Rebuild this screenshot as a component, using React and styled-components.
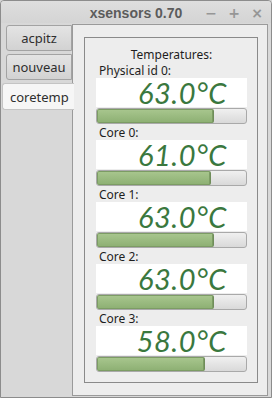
import React from "react";
import styled, { createGlobalStyle } from "styled-components";

const GlobalStyle = createGlobalStyle`
  html, body {
    margin: 0;
    padding: 0;
    background: #d6d6d6;
  }
  * { box-sizing: border-box; }
`

const Window = styled.div`
  width: 272px;
  height: 398px;
  border: 1px solid #8c8c8c;
  border-radius: 4px 4px 0 0;
  background: #d8d8d8;
  display: flex;
  flex-direction: column;
  font-family: "Noto Sans", "DejaVu Sans", sans-serif;
  overflow: hidden;
`
const TitleBar = styled.div`
  height: 23px;
  display: grid;
  grid-template-columns: 1fr auto 1fr;
  align-items: center;
  background: linear-gradient(#dedede, #d4d4d4);
`
const Title = styled.div`
  grid-column: 2;
  font-family: "Liberation Sans", "DejaVu Sans", sans-serif;
  font-weight: bold;
  font-size: 14px;
  color: #5c5c5c;
  padding-top: 2px;
`
const TitleButtons = styled.div`
  grid-column: 3;
  justify-self: end;
  display: flex;
  gap: 11px;
  padding-right: 8px;
  padding-top: 1px;
`
const TitleButton = styled.span`
  width: 12px;
  text-align: center;
  font-family: "DejaVu Sans", sans-serif;
  font-weight: bold;
  font-size: 14px;
  color: #969696;
`
const Body = styled.div`
  flex: 1;
  display: flex;
  padding-right: 3px;
  padding-bottom: 1px;
`
const TabColumn = styled.div`
  width: 71px;
  display: flex;
  flex-direction: column;
  gap: 3px;
  padding-top: 2px;
  position: relative;
  z-index: 1;
`
const Tab = styled.div`
  height: ${p => (p.$active ? 27 : 26)}px;
  margin-left: ${p => (p.$active ? 1 : 5)}px;
  margin-right: ${p => (p.$active ? -2 : 0)}px;
  border: 1px solid ${p => (p.$active ? "#c4c4c4" : "#a3a3a3")};
  border-right: ${p => (p.$active ? "none" : "1px solid #a3a3a3")};
  border-radius: 3px 0 0 3px;
  background: ${p => (p.$active ? "#f6f6f6" : "linear-gradient(#e4e4e4, #d2d2d2)")};
  display: flex;
  align-items: center;
  justify-content: ${p => (p.$active ? "flex-start" : "center")};
  padding-left: ${p => (p.$active ? 7 : 0)}px;
  font-size: 13px;
  color: #2e2e2e;
`
const Panel = styled.div`
  flex: 1;
  margin-top: 1px;
  background: #ededed;
  border: 1px solid #9a9a9a;
  padding: 12px 9px 12px 11px;
  display: flex;
`
const Frame = styled.div`
  flex: 1;
  border: 1px solid #8a8a8a;
  padding: 9px 10px 10px 11px;
  display: flex;
  flex-direction: column;
  gap: 1px;
`
const Heading = styled.div`
  height: 15px;
  line-height: 15px;
  text-align: center;
  font-size: 12px;
  color: #1e1e1e;
`
const Sensor = styled.div`
  display: flex;
  flex-direction: column;
`
const Label = styled.div`
  height: 15px;
  line-height: 15px;
  padding-left: 3px;
  font-size: 12px;
  color: #1e1e1e;
`
const Lcd = styled.div`
  height: 29px;
  background: #ffffff;
  display: flex;
  align-items: center;
  justify-content: flex-end;
  padding-right: 20px;
`
const LcdText = styled.span`
  font-family: "Lato", "DejaVu Sans", sans-serif;
  font-style: italic;
  font-weight: 400;
  font-size: 29px;
  letter-spacing: 0.5px;
  color: #3a783e;
  line-height: 24px;
`
const Trough = styled.div`
  height: 16px;
  margin-top: 1px;
  border: 1px solid #a9a9a9;
  border-radius: 3px;
  background: linear-gradient(#f0f0f0, #d9d9d9);
  overflow: hidden;
  display: flex;
`
const Fill = styled.div`
  height: 100%;
  background: linear-gradient(#a9c78f, #8caf72);
  border-right: 1px solid #6f8d5a;
  box-shadow: inset 0 0 0 1px #7c9c64;
  border-radius: 2px;
`

const sensors = [
  { name: "Physical id 0:", temp: 63.0 },
  { name: "Core 0:", temp: 61.0 },
  { name: "Core 1:", temp: 63.0 },
  { name: "Core 2:", temp: 63.0 },
  { name: "Core 3:", temp: 58.0 },
]

const MAX_TEMP = 80

function App() {
  return (
    <>
      <GlobalStyle />
      <Window>
        <TitleBar>
          <Title>xsensors 0.70</Title>
          <TitleButtons>
            <TitleButton>−</TitleButton>
            <TitleButton>+</TitleButton>
            <TitleButton>×</TitleButton>
          </TitleButtons>
        </TitleBar>
        <Body>
          <TabColumn>
            <Tab>acpitz</Tab>
            <Tab>nouveau</Tab>
            <Tab $active>coretemp</Tab>
          </TabColumn>
          <Panel>
            <Frame>
              <Heading>Temperatures:</Heading>
              {sensors.map(s => (
                <Sensor key={s.name}>
                  <Label>{s.name}</Label>
                  <Lcd>
                    <LcdText>{s.temp.toFixed(1)}°C</LcdText>
                  </Lcd>
                  <Trough>
                    <Fill style={{ width: `${(s.temp / MAX_TEMP) * 100}%` }} />
                  </Trough>
                </Sensor>
              ))}
            </Frame>
          </Panel>
        </Body>
      </Window>
    </>
  );
}

export default App;
